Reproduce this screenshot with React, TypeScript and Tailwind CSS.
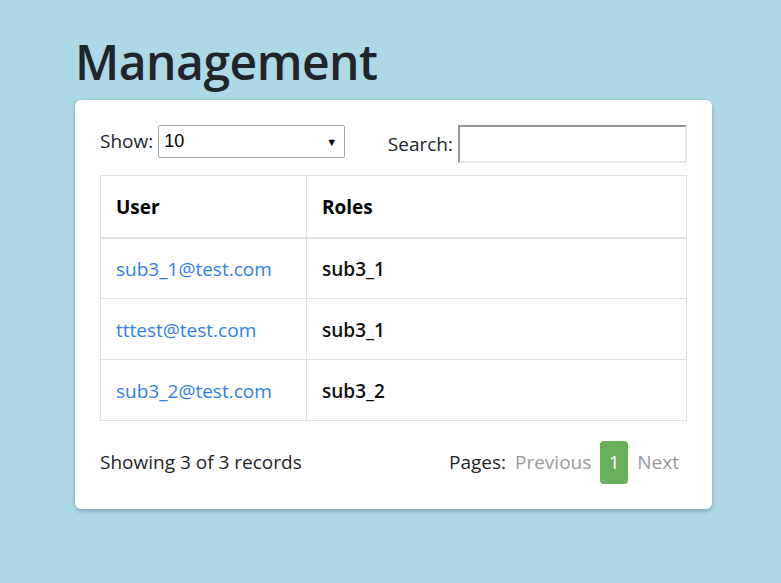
import { useState } from "react";

const ROWS = [
  { user: "sub3_1@test.com", role: "sub3_1" },
  { user: "tttest@test.com", role: "sub3_1" },
  { user: "sub3_2@test.com", role: "sub3_2" },
];

export default function App() {
  const [show, setShow] = useState("10");
  const [search, setSearch] = useState("");

  return (
    <div className="min-h-[583px] bg-[#add8e6] px-[75px] pt-[30px] font-['Open_Sans',sans-serif] text-[#212529]">
      <h1 className="text-[48px] font-semibold leading-[64px] tracking-[-0.5px]">Management</h1>
      <div className="mt-[6px] w-[637px] rounded-[6px] bg-white px-[25px] pt-[20px] pb-[25px] shadow-[0_2px_4px_rgba(0,0,0,0.25)]">
        {/* Controls */}
        <div className="flex items-center justify-between text-[19px]">
          <label className="flex items-center gap-[5px]">
            <span>Show:</span>
            <span className="relative">
              <select
                value={show}
                onChange={e => setShow(e.target.value)}
                className="h-[33px] w-[187px] appearance-none rounded-[2px] border border-[#a6a6a6] bg-white pl-[5px] font-['Liberation_Sans',sans-serif] text-[18px] text-black"
              >
                <option>10</option>
                <option>25</option>
                <option>50</option>
              </select>
              <span className="pointer-events-none absolute right-[8px] top-[9px] text-[11px] text-black">▼</span>
            </span>
          </label>
          <label className="flex items-center gap-[5px] pt-[5px]">
            <span>Search:</span>
            <input
              value={search}
              onChange={e => setSearch(e.target.value)}
              className="h-[38px] w-[229px] border-2 border-[#e8e8e8] border-l-[#959595] border-t-[#959595] bg-white px-[4px] outline-none"
            />
          </label>
        </div>

        {/* Table */}
        <table className="mt-[12px] w-full border-collapse text-[19px]">
          <thead>
            <tr className="border-b-2 border-[#dee2e6]">
              <th className="h-[62px] w-[206px] border border-[#dee2e6] px-[15px] pt-[2px] text-left font-bold text-black">User</th>
              <th className="h-[62px] border border-[#dee2e6] px-[15px] pt-[2px] text-left font-bold text-black">Roles</th>
            </tr>
          </thead>
          <tbody>
            {ROWS.map(r => (
              <tr key={r.user}>
                <td className="h-[61px] border border-[#dee2e6] px-[15px] pt-[2px]">
                  <a href="#" className="text-[#2f7fe6]">{r.user}</a>
                </td>
                <td className="h-[61px] border border-[#dee2e6] px-[15px] pt-[2px] font-semibold text-[#111]">{r.role}</td>
              </tr>
            ))}
          </tbody>
        </table>

        {/* Footer */}
        <div className="mt-[20px] flex items-center justify-between text-[19px]">
          <span>Showing 3 of 3 records</span>
          <div className="flex items-center gap-[9px] pr-[8px]">
            <span>Pages:</span>
            <span className="text-[#999]">Previous</span>
            <span className="flex h-[43px] w-[28px] items-center justify-center rounded-[4px] bg-[#6aaf5b] text-white">1</span>
            <span className="text-[#999]">Next</span>
          </div>
        </div>
      </div>
    </div>
  );
}
